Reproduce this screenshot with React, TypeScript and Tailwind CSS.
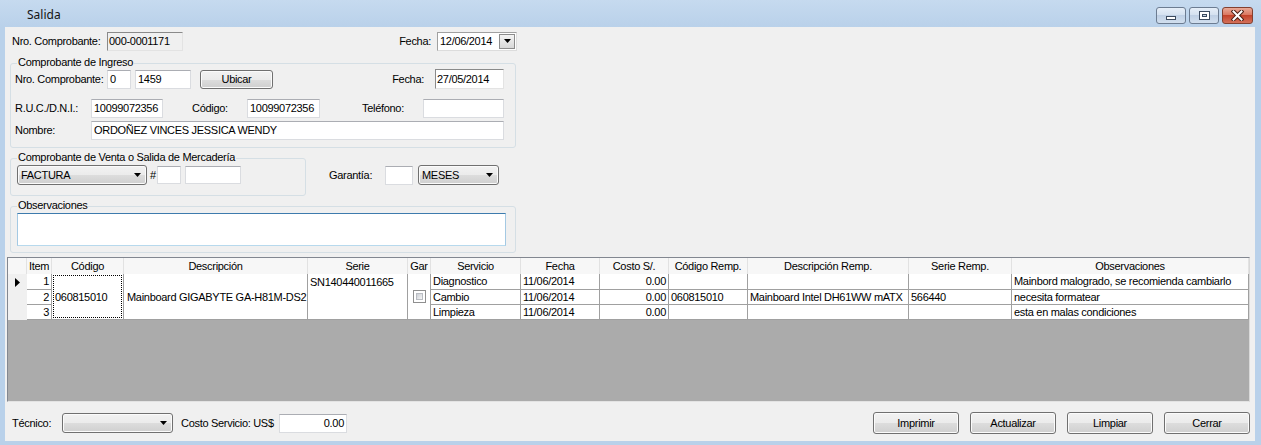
import React from "react";

const Arrow = () => (
  <svg width="7" height="4" viewBox="0 0 7 4" className="shrink-0">
    <path d="M0 0h7L3.5 4z" fill="#000" />
  </svg>
);

function TextBox({
  className = "",
  children,
  right = false,
}: {
  className?: string;
  children?: React.ReactNode;
  right?: boolean;
}) {
  return (
    <div
      className={`bg-white border border-[#dadce0] border-t-[#abadb3] flex items-center px-[2px] leading-[13px] whitespace-nowrap overflow-hidden ${
        right ? "justify-end" : ""
      } ${className}`}
    >
      {children}
    </div>
  );
}

function Sunken({ className = "", children }: { className?: string; children?: React.ReactNode }) {
  return (
    <div
      className={`border border-[#e3e3e3] border-t-[#8a8a8a] border-l-[#8a8a8a] flex items-center px-[1px] leading-[13px] whitespace-nowrap overflow-hidden ${className}`}
    >
      {children}
    </div>
  );
}

function Btn({ className = "", children }: { className?: string; children?: React.ReactNode }) {
  return (
    <div
      className={`rounded-[3px] border border-[#707070] bg-[linear-gradient(to_bottom,#f2f2f2_0%,#ebebeb_50%,#dddddd_50%,#cfcfcf_100%)] shadow-[inset_0_0_0_1px_#fbfbfb] flex items-center justify-center leading-[13px] ${className}`}
    >
      {children}
    </div>
  );
}

function Combo({ className = "", text = "" }: { className?: string; text?: string }) {
  return (
    <div
      className={`rounded-[3px] border border-[#707070] bg-[linear-gradient(to_bottom,#f2f2f2_0%,#ebebeb_50%,#dddddd_50%,#cfcfcf_100%)] shadow-[inset_0_0_0_1px_#fbfbfb] flex items-center justify-between pl-[3px] pr-[5px] leading-[13px] ${className}`}
    >
      <span>{text}</span>
      <Arrow />
    </div>
  );
}

function Group({
  className = "",
  legend,
  children,
}: {
  className?: string;
  legend: string;
  children?: React.ReactNode;
}) {
  return (
    <div className={`relative border border-[#d5dfe5] rounded-[3px] ${className}`}>
      <span className="absolute left-[6px] -top-[8px] px-[1px] bg-[#f0f0f0] leading-[13px] whitespace-nowrap">
        {legend}
      </span>
      {children}
    </div>
  );
}

const hdr = "bg-[#f7f7f7] border-r border-[#e2e2e2] text-center leading-[16px] whitespace-nowrap overflow-hidden";
const cell = "bg-white border-r border-b border-[#a0a0a0] leading-[14px] whitespace-nowrap overflow-hidden px-[2px]";
const rh = "bg-[#f0f0f0] flex items-center justify-center";

function Checkbox() {
  return (
    <div className="w-[13px] h-[13px] border border-[#8f8f8f] bg-white p-[2px]">
      <div className="w-full h-full bg-[linear-gradient(135deg,#cbcfd5,#f6f6f6)] border border-[#b9bcc2]" />
    </div>
  );
}

export default function App() {
  return (
    <div className="w-[1261px] h-[445px] bg-[#b9d1ea] flex flex-col font-['Liberation_Sans',Arial,sans-serif] text-[11px] tracking-[-0.3px] whitespace-nowrap text-black overflow-hidden">
      {/* Title bar */}
      <div className="h-[27px] flex items-start bg-[linear-gradient(to_bottom,#c6daef,#b9d1ea)]">
        <div className="pl-[27px] pt-[6px] text-[12px] leading-[17px] tracking-normal font-['Noto_Sans',sans-serif] text-[#141414]">
          Salida
        </div>
        <div className="ml-auto flex gap-[3px] pt-[7px] pr-[8px]">
          <div className="w-[30px] h-[17px] rounded-[3px] border border-[#6c7c91] bg-[linear-gradient(to_bottom,#e6eef8_0%,#d3e0ef_50%,#bfd0e5_50%,#d2dfee_100%)] flex items-end justify-center pb-[3px]">
            <div className="w-[10px] h-[4px] bg-white border border-[#3b4a5e]" />
          </div>
          <div className="w-[30px] h-[17px] rounded-[3px] border border-[#6c7c91] bg-[linear-gradient(to_bottom,#e6eef8_0%,#d3e0ef_50%,#bfd0e5_50%,#d2dfee_100%)] flex items-center justify-center">
            <div className="w-[11px] h-[9px] bg-white border border-[#3b4a5e] flex items-center justify-center">
              <div className="w-[5px] h-[3px] border border-[#3b4a5e] bg-[#c9d6e7]" />
            </div>
          </div>
          <div className="w-[31px] h-[17px] rounded-[3px] border border-[#83402f] bg-[linear-gradient(to_bottom,#e9a996_0%,#d9735c_50%,#c4432a_50%,#d3705a_100%)] flex items-center justify-center">
            <svg width="13" height="11" viewBox="0 0 13 11">
              <path d="M2.5 1.5l8 8M10.5 1.5l-8 8" stroke="#4a1e14" strokeWidth="4" strokeLinecap="square" />
              <path d="M2.5 1.5l8 8M10.5 1.5l-8 8" stroke="#ffffff" strokeWidth="2" strokeLinecap="square" />
            </svg>
          </div>
        </div>
      </div>

      {/* Client area */}
      <div className="ml-[5px] mr-[6px] h-[414px] bg-[#f0f0f0] flex flex-col">
        {/* Row 1 */}
        <div className="mt-[3px] h-[22px] w-[512px] pl-[7px] flex items-center">
          <div className="w-[95px]">Nro. Comprobante:</div>
          <Sunken className="w-[76px] h-[19px] bg-[#f0f0f0]">000-0001171</Sunken>
          <div className="flex-1 text-right pr-[6px]">Fecha:</div>
          <div className="w-[80px] h-[19px] bg-white border border-[#a0a0a0] border-b-[#dcdcdc] border-r-[#dcdcdc] flex items-center justify-between pl-[2px]">
            <span className="leading-[13px]">12/06/2014</span>
            <div className="w-[16px] h-[15px] mr-[1px] border border-[#8c8c8c] bg-[linear-gradient(to_bottom,#f4f4f4,#d8d8d8)] flex items-center justify-center">
              <Arrow />
            </div>
          </div>
        </div>

        {/* Comprobante de Ingreso */}
        <Group legend="Comprobante de Ingreso" className="ml-[5px] mt-[11px] w-[506px] h-[85px]">
          <div className="pt-[4px] pl-[4px] pr-[11px] flex flex-col">
            <div className="h-[22px] flex items-center">
              <div className="w-[92px]">Nro. Comprobante:</div>
              <TextBox className="w-[24px] h-[19px]">0</TextBox>
              <TextBox className="ml-[4px] w-[56px] h-[19px]">1459</TextBox>
              <Btn className="ml-[9px] w-[73px] h-[19px]">Ubicar</Btn>
              <div className="flex-1 text-right pr-[11px]">Fecha:</div>
              <Sunken className="w-[69px] h-[20px] bg-white">27/05/2014</Sunken>
            </div>
            <div className="mt-[9px] h-[19px] flex items-center">
              <div className="w-[76px]">R.U.C./D.N.I.:</div>
              <TextBox className="w-[72px] h-[19px]">10099072356</TextBox>
              <div className="w-[84px] pl-[29px]">Código:</div>
              <TextBox className="w-[73px] h-[19px]">10099072356</TextBox>
              <div className="w-[103px] pl-[42px]">Teléfono:</div>
              <TextBox className="w-[81px] h-[19px]" />
            </div>
            <div className="mt-[3px] h-[19px] flex items-center">
              <div className="w-[76px]">Nombre:</div>
              <TextBox className="w-[413px] h-[19px]">ORDOÑEZ VINCES JESSICA WENDY</TextBox>
            </div>
          </div>
        </Group>

        {/* Comprobante de Venta + Garantía */}
        <div className="mt-[10px] ml-[5px] flex items-start">
          <Group legend="Comprobante de Venta o Salida de Mercadería" className="w-[296px] h-[38px]">
            <div className="pt-[6px] pl-[6px] flex items-center">
              <Combo className="w-[130px] h-[20px]" text="FACTURA" />
              <div className="ml-[3px] w-[7px]">#</div>
              <TextBox className="w-[24px] h-[18px]" />
              <TextBox className="ml-[4px] w-[56px] h-[18px]" />
            </div>
          </Group>
          <div className="ml-[23px] pt-[7px] flex items-center">
            <div className="w-[56px]">Garantía:</div>
            <TextBox className="w-[28px] h-[19px]" />
            <Combo className="ml-[5px] w-[81px] h-[20px]" text="MESES" />
          </div>
        </div>

        {/* Observaciones */}
        <Group legend="Observaciones" className="ml-[5px] mt-[10px] w-[506px] h-[47px]">
          <div className="mt-[6px] ml-[6px] w-[489px] h-[33px] bg-white border border-[#a4c9e3] border-t-[#3d7bad] border-b-[#b7d9ed]" />
        </Group>

        {/* Grid */}
        <div className="ml-[2px] mt-[4px] w-[1243px] h-[145px] border border-[#828790] border-b-[#e3e3e3] border-r-[#d9d9d9] bg-[#ababab] overflow-hidden">
          <div className="grid grid-cols-[19px_25px_72px_184px_100px_23px_90px_79px_69px_79px_161px_103px_237px] grid-rows-[16px_16px_15px_15px]">
            <div className={hdr}></div>
            <div className={hdr}>Item</div>
            <div className={hdr}>Código</div>
            <div className={hdr}>Descripción</div>
            <div className={hdr}>Serie</div>
            <div className={hdr}>Gar</div>
            <div className={hdr}>Servicio</div>
            <div className={hdr}>Fecha</div>
            <div className={hdr}>Costo S/.</div>
            <div className={hdr}>Código Remp.</div>
            <div className={hdr}>Descripción Remp.</div>
            <div className={hdr}>Serie Remp.</div>
            <div className={hdr}>Observaciones</div>

            {/* row 1 */}
            <div className={rh}>
              <svg width="6" height="9" viewBox="0 0 6 9">
                <path d="M0 0L5 4.5L0 9z" fill="#000" />
              </svg>
            </div>
            <div className={`${cell} text-right`}>1</div>
            <div className={`row-span-3 bg-white border-r border-b border-[#a0a0a0] p-[1px]`}>
              <div className="w-full h-full border border-dotted border-black flex items-center pl-[1px] leading-[14px] whitespace-nowrap overflow-hidden">
                060815010
              </div>
            </div>
            <div className={`row-span-3 ${cell} flex items-center pl-[3px]`}>Mainboard GIGABYTE GA-H81M-DS2</div>
            <div className={`row-span-3 ${cell} pt-[1px]`}>SN140440011665</div>
            <div className={`row-span-3 bg-white border-r border-b border-[#a0a0a0] flex items-center justify-center`}>
              <Checkbox />
            </div>
            <div className={cell}>Diagnostico</div>
            <div className={cell}>11/06/2014</div>
            <div className={`${cell} text-right`}>0.00</div>
            <div className={cell}></div>
            <div className={cell}></div>
            <div className={cell}></div>
            <div className={cell}>Mainbord malogrado, se recomienda cambiarlo</div>

            {/* row 2 */}
            <div className={rh}></div>
            <div className={`${cell} text-right`}>2</div>
            <div className={cell}>Cambio</div>
            <div className={cell}>11/06/2014</div>
            <div className={`${cell} text-right`}>0.00</div>
            <div className={cell}>060815010</div>
            <div className={cell}>Mainboard Intel DH61WW mATX</div>
            <div className={cell}>566440</div>
            <div className={cell}>necesita formatear</div>

            {/* row 3 */}
            <div className={rh}></div>
            <div className={`${cell} text-right`}>3</div>
            <div className={cell}>Limpieza</div>
            <div className={cell}>11/06/2014</div>
            <div className={`${cell} text-right`}>0.00</div>
            <div className={cell}></div>
            <div className={cell}></div>
            <div className={cell}></div>
            <div className={cell}>esta en malas condiciones</div>
          </div>
        </div>

        {/* Bottom row */}
        <div className="mt-[10px] h-[22px] pl-[7px] pr-[5px] flex items-center">
          <div className="w-[50px]">Técnico:</div>
          <Combo className="w-[111px] h-[20px]" text="" />
          <div className="ml-[8px] w-[98px] whitespace-nowrap">Costo Servicio: US$</div>
          <TextBox className="w-[68px] h-[19px]" right>
            0.00
          </TextBox>
          <div className="ml-auto flex gap-[11px]">
            <Btn className="w-[86px] h-[22px]">Imprimir</Btn>
            <Btn className="w-[86px] h-[22px]">Actualizar</Btn>
            <Btn className="w-[86px] h-[22px]">Limpiar</Btn>
            <Btn className="w-[86px] h-[22px]">Cerrar</Btn>
          </div>
        </div>
      </div>
    </div>
  );
}
